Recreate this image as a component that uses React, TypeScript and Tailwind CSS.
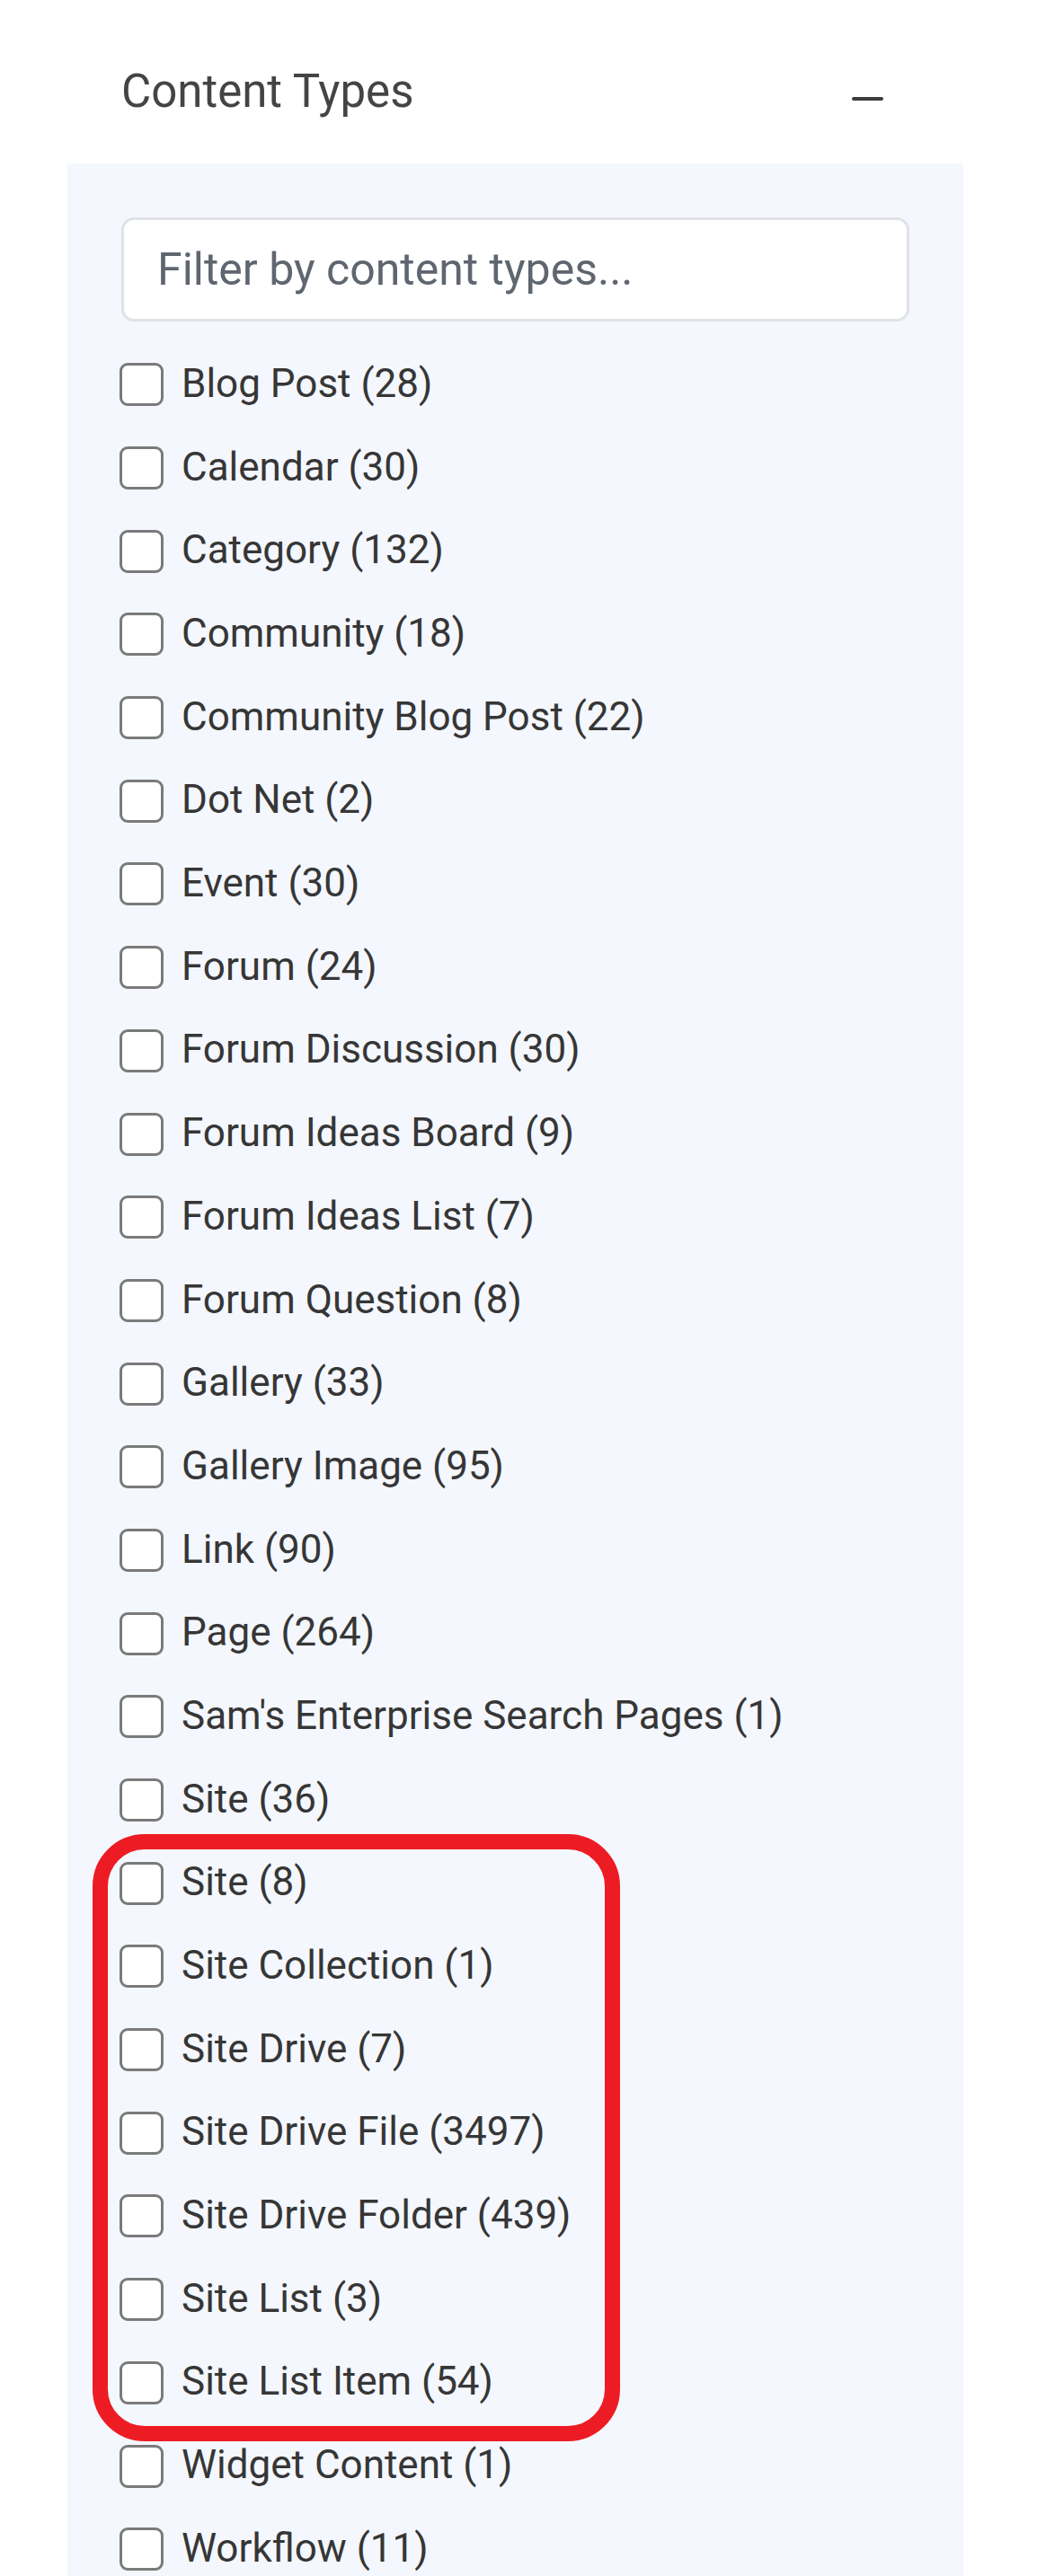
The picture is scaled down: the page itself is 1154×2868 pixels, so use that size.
import React from 'react';

const contentTypes: { name: string; count: number }[] = [
    { name: 'Blog Post', count: 28 },
    { name: 'Calendar', count: 30 },
    { name: 'Category', count: 132 },
    { name: 'Community', count: 18 },
    { name: 'Community Blog Post', count: 22 },
    { name: 'Dot Net', count: 2 },
    { name: 'Event', count: 30 },
    { name: 'Forum', count: 24 },
    { name: 'Forum Discussion', count: 30 },
    { name: 'Forum Ideas Board', count: 9 },
    { name: 'Forum Ideas List', count: 7 },
    { name: 'Forum Question', count: 8 },
    { name: 'Gallery', count: 33 },
    { name: 'Gallery Image', count: 95 },
    { name: 'Link', count: 90 },
    { name: 'Page', count: 264 },
    { name: "Sam's Enterprise Search Pages", count: 1 },
    { name: 'Site', count: 36 },
    { name: 'Site', count: 8 },
    { name: 'Site Collection', count: 1 },
    { name: 'Site Drive', count: 7 },
    { name: 'Site Drive File', count: 3497 },
    { name: 'Site Drive Folder', count: 439 },
    { name: 'Site List', count: 3 },
    { name: 'Site List Item', count: 54 },
    { name: 'Widget Content', count: 1 },
    { name: 'Workflow', count: 11 },
];

const CheckRow: React.FC<{ label: string }> = ({ label }) => (
    <label className="flex items-center gap-[20px] h-[92.7px] cursor-pointer">
        <span className="-ml-[2px] w-[49px] h-[48px] shrink-0 bg-white border-[3.5px] border-[#7a7a7a] rounded-[9px]" />
        <span className="text-[44px] leading-[1.2] text-[#363636] pb-[2px] whitespace-nowrap">{label}</span>
    </label>
);

const App: React.FC = () => {
    return (
        <div className="min-h-screen bg-white pl-[75px] font-['Roboto','Liberation_Sans',sans-serif] overflow-hidden">
            <div className="w-[997px]">

                {/* Header */}
                <div className="flex justify-between mt-[72px] h-[60px] pl-[60px] pr-[89px]">
                    <h2 className="text-[51px] leading-[60px] text-[#444444]">Content Types</h2>
                    <span className="mt-[36px] w-[35px] h-[4px] rounded-full bg-[#3d3d3d]" />
                </div>

                {/* Panel */}
                <div className="relative mt-[50px] bg-[#f4f7fd] px-[60px] pt-[60px]">
                    <input
                        type="text"
                        placeholder="Filter by content types..."
                        className="block w-full h-[116px] bg-white border-[3px] border-[#e0e2e7] rounded-[14px] px-[37px] text-[50px] text-[#333] placeholder:text-[#5f6670] outline-none"
                    />

                    <div className="mt-[24px] flex flex-col">
                        {contentTypes.map((item, i) => (
                            <CheckRow key={i} label={`${item.name} (${item.count})`} />
                        ))}
                    </div>

                    {/* highlight annotation */}
                    <div className="pointer-events-none absolute left-[28px] top-[1860px] w-[587px] h-[676px] border-[17px] border-[#ed1c24] rounded-[58px]" />
                </div>

            </div>
        </div>
    );
};

export default App;
